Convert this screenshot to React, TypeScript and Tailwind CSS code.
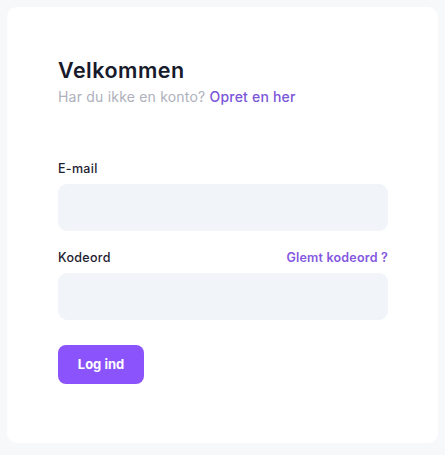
import React from "react";

export default function App() {
  return (
    <div className="w-[445px] h-[455px] bg-[#f7f8fa] p-[7px]" style={{ fontFamily: "Inter, 'Noto Sans', sans-serif" }}>
      <div className="w-[431px] h-[436px] bg-white rounded-[10px] pl-[51px] pr-[50px] pt-[49px]">
        <h1 className="text-[21.5px] leading-[28px] font-semibold text-[#161a2b] tracking-[0.5px]">Velkommen</h1>
        <p className="mt-[3px] text-[14px] leading-[20px] text-[#aeb0bb] tracking-[0.2px]">
          Har du ikke en konto? <span className="text-[#7b55d9] font-medium">Opret en her</span>
        </p>
        <div className="mt-[53px]">
          <label className="block text-[12.5px] leading-[18px] font-medium text-[#1e2130] tracking-[0.3px]">E-mail</label>
          <div className="mt-[6px] h-[47px] rounded-[9px] bg-[#f1f4f8]" />
        </div>
        <div className="mt-[18px]">
          <div className="flex justify-between items-center">
            <label className="block text-[12.5px] leading-[18px] font-medium text-[#1e2130] tracking-[0.3px]">Kodeord</label>
            <span className="text-[12.5px] leading-[18px] font-semibold text-[#8457e0] tracking-[0.2px]">Glemt kodeord ?</span>
          </div>
          <div className="mt-[6px] h-[47px] rounded-[9px] bg-[#f1f4f8]" />
        </div>
        <button className="mt-[25px] w-[86px] h-[39px] rounded-[8px] bg-[#8b53fb] text-white text-[13px] font-bold">Log ind</button>
      </div>
    </div>
  );
}
